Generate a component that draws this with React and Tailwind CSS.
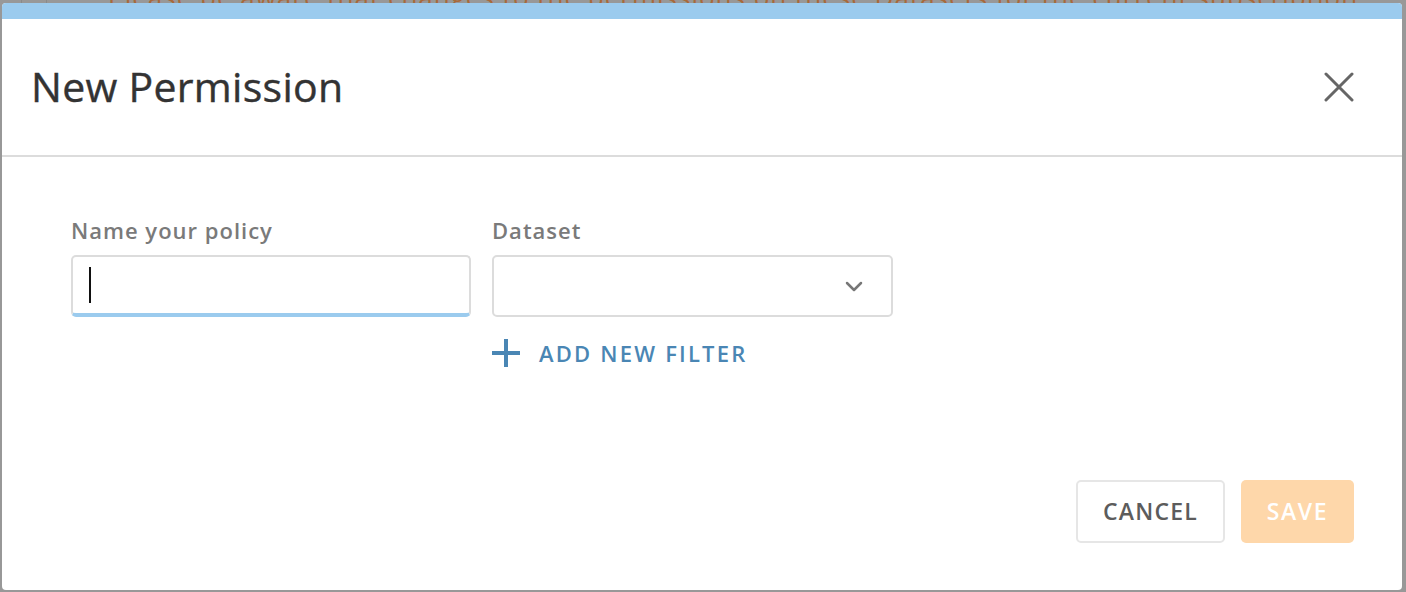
import React from "react";

export default function App() {
  return (
    <div
      className="relative w-full h-[592px] bg-[#989898] overflow-hidden"
      style={{ fontFamily: '"Open Sans", "Noto Sans", sans-serif' }}
    >
      {/* page text behind the overlay, peeking out at the top */}
      <div className="absolute left-[108px] top-[-22px] text-[26px] text-[#a8693b] whitespace-nowrap tracking-[1px]">
        Please be aware that changes to the permissions on these Datasets for the current subscription
      </div>
      <div className="absolute left-[21px] top-0 h-[3px] w-[1px] bg-[#8a8a8a]" />
      <div className="absolute left-[46px] top-0 h-[3px] w-[1px] bg-[#8a8a8a]" />

      <div className="relative ml-[2px] mt-[3px] w-[1400px] h-[587px] bg-white rounded-[4px] overflow-hidden flex flex-col">
        <div className="h-[16px] bg-[#9bcbee] shrink-0" />
        <div className="h-[138px] shrink-0 border-b-2 border-[#dcdcdc] flex items-center justify-between pl-[29px] pr-[48px]">
          <h1 className="text-[41px] leading-none text-[#333333] font-normal tracking-[0.3px] mt-[-2px] [-webkit-text-stroke:0.4px_#333333]">New Permission</h1>
          <button className="w-[30px] h-[30px] flex items-center justify-center">
            <svg width="30" height="30" viewBox="0 0 30 30" fill="none">
              <path d="M2 2 L28 28 M28 2 L2 28" stroke="#666666" strokeWidth="3" strokeLinecap="round" />
            </svg>
          </button>
        </div>

        <div className="flex-1 flex flex-col pl-[69px] pr-[48px] pt-[58px]">
          <div className="flex gap-[21px]">
            <div className="flex flex-col w-[400px]">
              <label className="text-[22px] leading-[30px] text-[#7a7a7a] font-semibold tracking-[1px]">Name your policy</label>
              <div className="mt-[10px] h-[62px] rounded-[5px] border-2 border-[#dcdcdc] border-b-[#9bcbee] border-b-[4px] flex items-center pl-[16px]">
                <div className="w-[2px] h-[36px] bg-[#111]" />
              </div>
            </div>
            <div className="flex flex-col w-[401px]">
              <label className="text-[22px] leading-[30px] text-[#7a7a7a] font-semibold tracking-[1px]">Dataset</label>
              <div className="mt-[10px] h-[62px] rounded-[5px] border-2 border-[#dcdcdc] flex items-center justify-end pr-[28px]">
                <svg width="18" height="11" viewBox="0 0 18 11" fill="none">
                  <path d="M2 2 L9 9 L16 2" stroke="#777777" strokeWidth="2.5" strokeLinecap="round" strokeLinejoin="round" />
                </svg>
              </div>
              <button className="mt-[22px] flex items-center gap-[19px] text-[#4a86b4]">
                <svg width="28" height="28" viewBox="0 0 28 28" fill="none">
                  <path d="M14 0 V28 M0 14 H28" stroke="#4a86b4" strokeWidth="4" />
                </svg>
                <span className="text-[22px] font-semibold tracking-[2.2px] leading-none">ADD NEW FILTER</span>
              </button>
            </div>
          </div>

          <div className="mt-auto mb-[47px] flex justify-end gap-[16px]">
            <button className="w-[149px] h-[63px] rounded-[5px] border-2 border-[#e6e6e6] text-[#5c5c5c] text-[23px] font-semibold tracking-[1.2px]">
              CANCEL
            </button>
            <button className="w-[113px] h-[63px] rounded-[5px] bg-[#fed7aa] text-white text-[23px] font-semibold tracking-[1.6px]">
              SAVE
            </button>
          </div>
        </div>
      </div>
    </div>
  );
}
